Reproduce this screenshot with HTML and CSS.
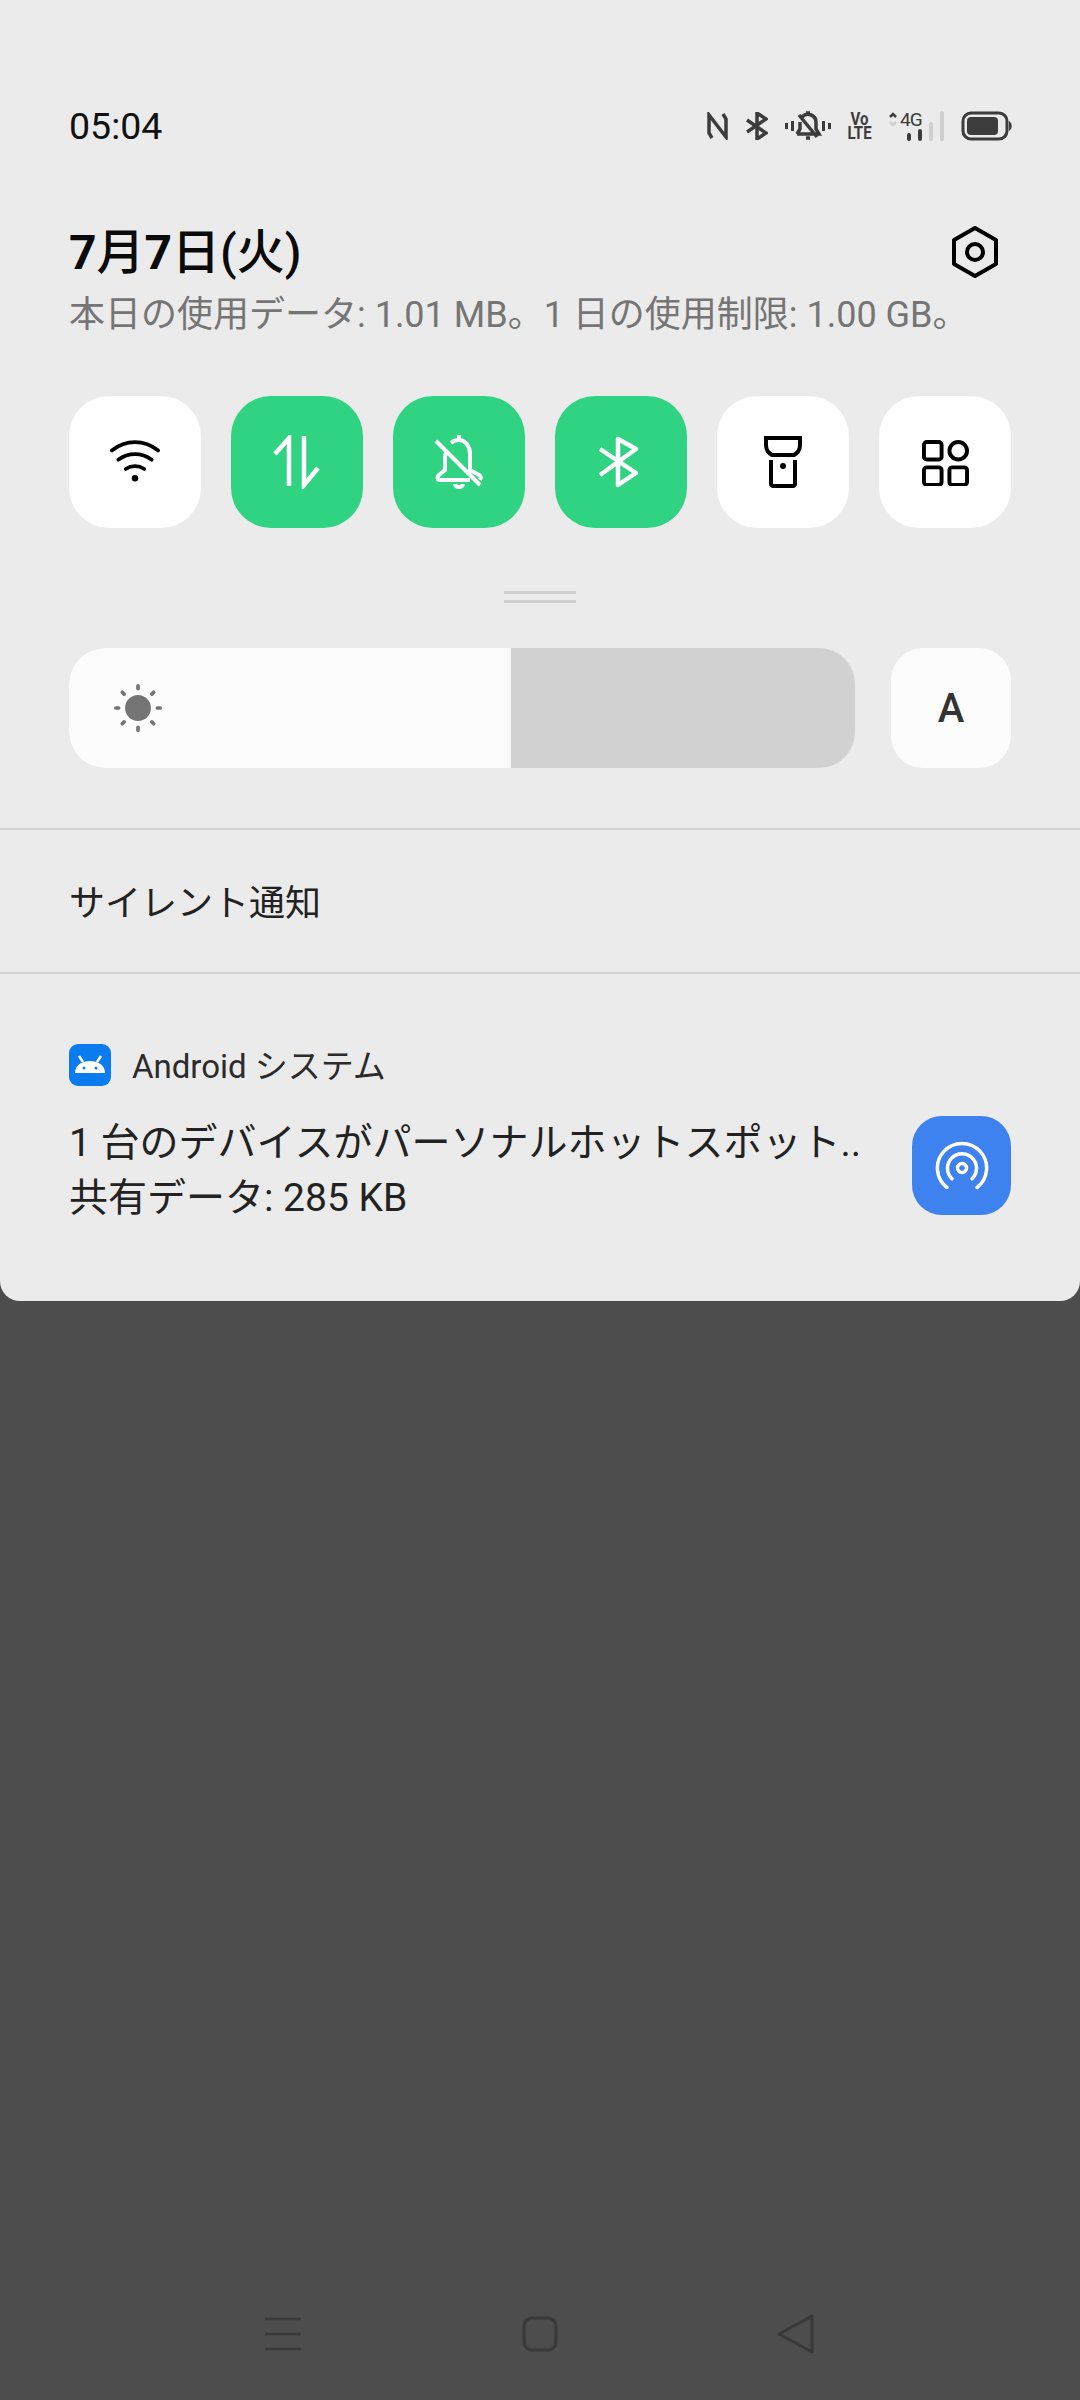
FILE: index.html
```html
<!DOCTYPE html>
<html lang="ja">
<head>
<meta charset="utf-8">
<title>通知パネル</title>
<link rel="stylesheet" href="styles.css">
</head>
<body>
<div class="screen">
  <section class="panel">
    <header class="status">
      <span class="time">05:04</span>
      <div class="status-icons">
        <svg width="22" height="28" viewBox="0 0 22 28"><path d="M5 26 2 21V3l17 22V7l-3-5" fill="none" stroke="#3c3c3c" stroke-width="3.500"/></svg>
        <svg width="22" height="28" viewBox="0 0 22 28"><path d="M1 8l19 13-9 6V1l9 6L1 20" fill="none" stroke="#3c3c3c" stroke-width="3.500"/></svg>
        <svg width="46" height="30" viewBox="0 0 46 30"><g fill="#3c3c3c"><rect x="0" y="12" width="3" height="6"/><rect x="6" y="10" width="3" height="10"/><rect x="37" y="10" width="3" height="10"/><rect x="43" y="12" width="3" height="6"/></g><path d="M12 23h22l-3-5v-7a8 8 0 0 0-14-5M15 11v7l-3 5M14 4l18 22M21 27h4M21 2h4" fill="none" stroke="#3c3c3c" stroke-width="3.500"/></svg>
        <span class="volte"><b>Vo</b><b>LTE</b></span>
        <div class="net">
          <svg class="net-arrows" width="10" height="20" viewBox="0 0 10 20"><path d="M2 7l3-3 3 3" fill="none" stroke="#3c3c3c" stroke-width="2.500"/><path d="M2 12l3 3 3-3" fill="none" stroke="#cfcfcf" stroke-width="2.500"/></svg>
          <span class="net-g">4G</span>
          <div class="bars"><i class="b1"></i><i class="b2"></i><i class="b3"></i><i class="b4"></i></div>
        </div>
        <svg width="51" height="30" viewBox="0 0 51 30"><rect x="2" y="2" width="44" height="26" rx="8" fill="none" stroke="#3c3c3c" stroke-width="3"/><rect x="6" y="6" width="31" height="18" rx="4" fill="#3c3c3c"/><path d="M48 10a6 6 0 0 1 0 10z" fill="#3c3c3c"/></svg>
      </div>
    </header>

    <div class="date-row">
      <div class="date"><b>7</b>月<b>7</b>日(火)</div>
      <svg width="50" height="54" viewBox="0 0 50 54"><path d="M25 3l21 12v24L25 51 4 39V15z" fill="none" stroke="#000" stroke-width="4" stroke-linejoin="round"/><circle cx="25" cy="27" r="8" fill="none" stroke="#000" stroke-width="4"/></svg>
    </div>
    <div class="usage">本日の使用データ: 1.01 MB。1 日の使用制限: 1.00 GB。</div>

    <div class="tiles">
      <div class="tile">
        <svg width="52" height="45" viewBox="0 0 56 48" fill="none" stroke="#000" stroke-width="4" stroke-linecap="round"><path d="M3 11c15-12 35-12 50 0M10 21c11-8 25-8 36 0M18 31c6-4 14-4 20 0"/><circle cx="28" cy="41" r="3.500" fill="#000" stroke="none"/></svg>
      </div>
      <div class="tile on">
        <svg width="48" height="54" viewBox="0 0 48 54" fill="none" stroke="#fff" stroke-width="4.500"><path d="M16 51V3L2 19M31 1v49l14-17"/></svg>
      </div>
      <div class="tile on">
        <svg width="52" height="54" viewBox="0 0 52 54" fill="none" stroke="#fff" stroke-width="4"><path d="M3 6l44 44M14 15c-1 2-2 4-2 7v13l-6 5c-2 2-2 5 1 5h30M18 8c2-2 5-3 8-3 6 0 11 6 11 14v16l9 5c2 1 2 3 1 5M22 49c0 4 8 4 8 0M24 2h4"/></svg>
      </div>
      <div class="tile on">
        <svg width="46" height="54" viewBox="0 0 46 54" fill="none" stroke="#fff" stroke-width="4.500" stroke-linejoin="round"><path d="M2 14l36 24-18 12V4l18 10L2 40"/></svg>
      </div>
      <div class="tile">
        <svg width="38" height="52" viewBox="0 0 38 52" fill="none" stroke="#000" stroke-width="4"><path d="M2 2h34v7c0 6-3 8-6 10H8c-3-2-6-4-6-10zM7 24v24c0 1 1 2 2 2h20c1 0 2-1 2-2V24"/><circle cx="19" cy="30" r="3" fill="#000" stroke="none"/></svg>
      </div>
      <div class="tile">
        <svg width="47" height="47" viewBox="0 0 48 48" fill="none" stroke="#000" stroke-width="4"><rect x="2" y="3" width="18" height="18" rx="3"/><circle cx="37" cy="12" r="9"/><rect x="2" y="29" width="18" height="18" rx="3"/><rect x="28" y="29" width="18" height="18" rx="3"/></svg>
      </div>
    </div>

    <div class="handle"><i></i><i></i></div>

    <div class="bright-row">
      <div class="slider">
        <div class="slider-fill">
          <svg width="48" height="48" viewBox="0 0 52 52"><circle cx="26" cy="26" r="14" fill="#757575"/><g stroke="#757575" stroke-width="4" stroke-linecap="round"><path d="M26 2v3M26 47v3M2 26h3M47 26h3M9 9l2 2M41 41l2 2M9 43l2-2M41 11l2-2"/></g></svg>
        </div>
      </div>
      <div class="auto">A</div>
    </div>

    <div class="silent">サイレント通知</div>

    <div class="notif">
      <div class="app">
        <div class="app-icon">
          <svg width="30" height="24" viewBox="0 0 30 24"><path d="M0 20c0-8 7-12 15-12s15 4 15 12z" fill="#fff"/><path d="M8 9 4 3M22 9l4-6" stroke="#fff" stroke-width="2.500"/><circle cx="9" cy="15" r="1.500" fill="#0a7cf0"/><circle cx="21" cy="15" r="1.500" fill="#0a7cf0"/></svg>
        </div>
        <span class="app-name">Android システム</span>
      </div>
      <div class="notif-body">
        <div class="notif-text">
          <div>1 台のデバイスがパーソナルホットスポット..</div>
          <div>共有データ: 285 KB</div>
        </div>
        <div class="hotspot">
          <svg width="54" height="50" viewBox="0 0 54 50" fill="none" stroke="#fff" stroke-width="3.500" stroke-linecap="round"><path d="M12 46.500A24.600 24.600 0 1 1 42 46.500"/><path d="M17 37.700A14.500 14.500 0 1 1 37 37.700"/><circle cx="27" cy="27" r="4.500"/></svg>
        </div>
      </div>
    </div>
  </section>

  <nav class="navbar">
    <svg width="38" height="36" viewBox="0 0 38 36" fill="none" stroke="#393939" stroke-width="2.500"><path d="M1 3h36M1 18h36M1 33h36"/></svg>
    <svg width="36" height="36" viewBox="0 0 36 36" fill="none" stroke="#393939" stroke-width="3"><rect x="2" y="2" width="32" height="32" rx="8"/></svg>
    <svg width="38" height="42" viewBox="0 0 38 42" fill="none" stroke="#393939" stroke-width="3" stroke-linejoin="round"><path d="M35 3v36L2 21z"/></svg>
  </nav>
</div>
</body>
</html>
```
FILE: styles.css
```css
* { box-sizing: border-box; }
html, body { margin: 0; padding: 0; }
body {
  width: 1080px;
  height: 2400px;
  overflow: hidden;
  background: #4d4d4d;
  font-family: Roboto, "Noto Sans CJK JP", sans-serif;
}
.screen {
  width: 1080px;
  height: 2400px;
  display: flex;
  flex-direction: column;
  justify-content: space-between;
}
.panel {
  height: 1301px;
  background: #ebebeb;
  border-radius: 0 0 20px 20px;
}
.status {
  height: 40px;
  margin: 106px 68px 0 69px;
  display: flex;
  align-items: center;
  justify-content: space-between;
}
.time { font-size: 37.500px; color: #111; }
.status-icons {
  display: flex;
  align-items: center;
  gap: 17px;
}
.volte {
  width: 23px;
  display: flex;
  flex-direction: column;
  align-items: center;
  font-family: "Liberation Sans Narrow", Roboto, sans-serif;
  color: #3c3c3c;
  font-size: 15px;
  line-height: 14.500px;
}
.volte b {
  font-weight: 700;
  transform: scaleY(1.250);
}
.net {
  display: flex;
  align-items: flex-start;
  height: 32px;
  width: 56px;
  position: relative;
}
.net-arrows { margin: 0 2px 0 0; }
.net-g {
  margin-top: -1px;
  font-size: 19px;
  line-height: 22px;
  color: #3c3c3c;
  letter-spacing: -1px;
}
.bars {
  position: absolute;
  right: 0;
  bottom: 1px;
  display: flex;
  align-items: flex-end;
  gap: 7px;
}
.bars i { width: 4px; display: block; border-radius: 2px; background: #3c3c3c; }
.bars .b1 { height: 8px; }
.bars .b2 { height: 12px; }
.bars .b3 { height: 19px; background: #cfcfcf; }
.bars .b4 { height: 30px; background: #cfcfcf; }

.date-row {
  margin: 72px 80px 0 69px;
  height: 68px;
  display: flex;
  align-items: center;
  justify-content: space-between;
}
.date {
  font-size: 48px;
  font-weight: 500;
  color: #0a0a0a;
  padding-bottom: 8px;
}
.date b { font-weight: 700; }
.usage {
  margin: 4px 0 0 69px;
  height: 50px;
  line-height: 50px;
  font-size: 36px;
  color: #757575;
  white-space: nowrap;
}
.tiles {
  margin: 56px 69px 0;
  display: flex;
  justify-content: space-between;
}
.tile {
  width: 132px;
  height: 132px;
  border-radius: 40px;
  background: #fff;
  display: flex;
  align-items: center;
  justify-content: center;
}
.tile.on { background: #2fd382; }
.handle {
  margin: 63px auto 0;
  width: 72px;
  height: 12px;
  display: flex;
  flex-direction: column;
  justify-content: space-between;
}
.handle i { display: block; height: 3px; background: #cfcfcf; }
.bright-row {
  margin: 45px 69px 0;
  display: flex;
  justify-content: space-between;
}
.slider {
  width: 786px;
  height: 120px;
  border-radius: 36px;
  background: #d1d1d1;
  overflow: hidden;
}
.slider-fill {
  width: 442px;
  height: 100%;
  background: #fcfcfc;
  border-right: 4px solid #f9f9f9;
  display: flex;
  align-items: center;
  padding-left: 45px;
}
.auto {
  width: 120px;
  height: 120px;
  border-radius: 32px;
  background: #fcfcfc;
  display: flex;
  align-items: center;
  justify-content: center;
  font-size: 40px;
  font-weight: 500;
  color: #333;
}
.silent {
  margin-top: 60px;
  height: 146px;
  padding: 0 0 3px 69px;
  border-top: 2px solid #d4d4d4;
  border-bottom: 2px solid #d4d4d4;
  display: flex;
  align-items: center;
  font-size: 36px;
  color: #222;
}
.notif { padding: 70px 69px 0; }
.app {
  display: flex;
  align-items: center;
  gap: 21px;
  height: 42px;
}
.app-icon {
  width: 42px;
  height: 42px;
  border-radius: 9px;
  background: #0a7cf0;
  display: flex;
  align-items: center;
  justify-content: center;
}
.app-name {
  font-size: 33px;
  color: #2b2b2b;
  padding-bottom: 2px;
}
.notif-body {
  margin-top: 30px;
  display: flex;
  justify-content: space-between;
}
.notif-text {
  font-size: 39px;
  line-height: 55px;
  color: #222;
  white-space: nowrap;
}
.hotspot {
  width: 99px;
  height: 99px;
  border-radius: 30px;
  background: #3e82f0;
  display: flex;
  align-items: center;
  justify-content: center;
}
.navbar {
  height: 96px;
  padding: 0 0 36px 264px;
  display: flex;
  align-items: center;
  gap: 219.500px;
}
```
